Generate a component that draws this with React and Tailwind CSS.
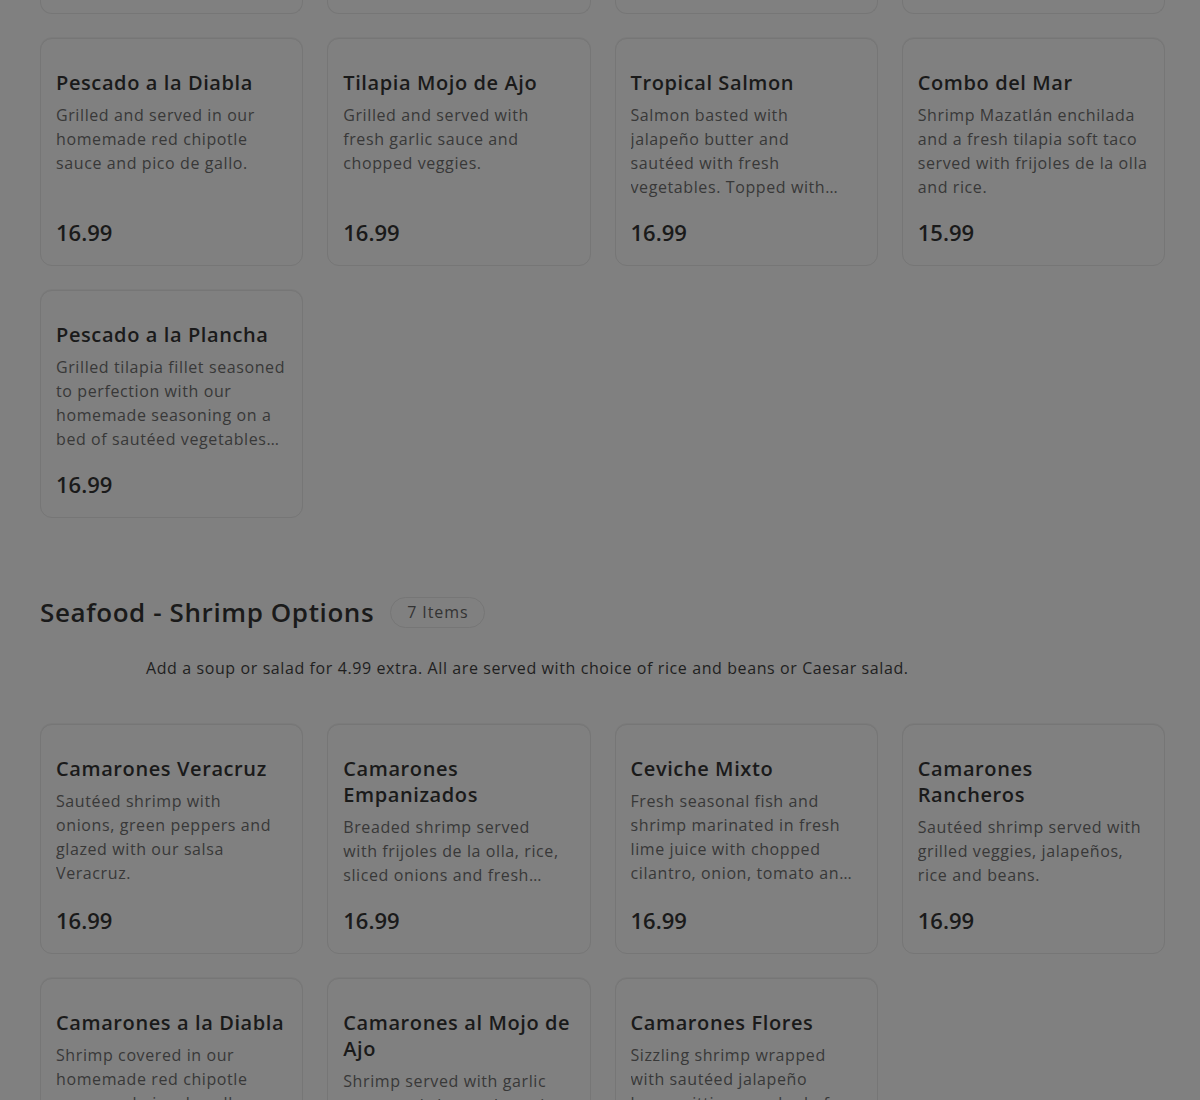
import React from "react";

const font = { fontFamily: '"Open Sans", "Liberation Sans", sans-serif' };

function Card({ title, desc, price, clamp }) {
  return (
    <div className="flex flex-col rounded-xl border border-[#767676] bg-[#808080] px-[15px] pt-[31px] pb-[19px] shadow-[0_-1px_0_rgba(0,0,0,0.04)]">
      <h3 className="whitespace-pre text-[20px] font-semibold leading-[26px] tracking-[0.6px] text-[#1a1a1a]">{title}</h3>
      <p className={`mt-[7px] whitespace-pre-line text-[16px] leading-6 tracking-[0.6px] text-[#383838] ${clamp === 3 ? "line-clamp-3" : "line-clamp-4"}`}>{desc}</p>
      <div className="mt-auto pt-[19px] text-[22px] font-semibold leading-7 text-[#1a1a1a]">{price}</div>
    </div>
  );
}

const fish = [
  { title: "Pescado a la Diabla", desc: "Grilled and served in our\nhomemade red chipotle\nsauce and pico de gallo.", price: "16.99" },
  { title: "Tilapia Mojo de Ajo", desc: "Grilled and served with\nfresh garlic sauce and\nchopped veggies.", price: "16.99" },
  { title: "Tropical Salmon", desc: "Salmon basted with\njalapeño butter and\nsautéed with fresh\nvegetables. Topped with mango pico de gallo.", price: "16.99" },
  { title: "Combo del Mar", desc: "Shrimp Mazatlán enchilada\nand a fresh tilapia soft taco\nserved with frijoles de la olla\nand rice.", price: "15.99" },
  { title: "Pescado a la Plancha", desc: "Grilled tilapia fillet seasoned\nto perfection with our\nhomemade seasoning on a\nbed of sautéed vegetables and rice.", price: "16.99" },
];

const shrimp = [
  { title: "Camarones Veracruz", desc: "Sautéed shrimp with\nonions, green peppers and\nglazed with our salsa\nVeracruz.", price: "16.99" },
  { title: "Camarones\nEmpanizados", desc: "Breaded shrimp served\nwith frijoles de la olla, rice,\nsliced onions and fresh avocado.", price: "16.99", clamp: 3 },
  { title: "Ceviche Mixto", desc: "Fresh seasonal fish and\nshrimp marinated in fresh\nlime juice with chopped\ncilantro, onion, tomato and cucumber.", price: "16.99" },
  { title: "Camarones\nRancheros", desc: "Sautéed shrimp served with\ngrilled veggies, jalapeños,\nrice and beans.", price: "16.99", clamp: 3 },
  { title: "Camarones a la Diabla", desc: "Shrimp covered in our\nhomemade red chipotle\nsauce and pico de gallo.", price: "16.99" },
  { title: "Camarones al Mojo de\nAjo", desc: "Shrimp served with garlic\nsauce and chopped veggies.", price: "16.99", clamp: 3 },
  { title: "Camarones Flores", desc: "Sizzling shrimp wrapped\nwith sautéed jalapeño\nbacon sitting on a bed of rice.", price: "16.99" },
];

export default function App() {
  return (
    <div className="h-[1100px] w-[1200px] overflow-hidden bg-[#808080]" style={font}>
      <div className="pl-10 pr-[35px]">
        <div className="grid grid-cols-4 gap-x-6">
          {[0, 1, 2, 3].map((i) => (
            <div key={i} className="h-[14px] rounded-b-xl border-x border-b border-[#767676]" />
          ))}
        </div>
        <div className="mt-6 grid grid-cols-4 gap-6">
          {fish.map((c) => (
            <Card key={c.title} {...c} />
          ))}
        </div>

        <div className="mt-[77px] flex items-center gap-4">
          <h2 className="text-[26px] font-semibold leading-[34px] tracking-[0.6px] text-[#1a1a1a]">Seafood - Shrimp Options</h2>
          <span className="flex h-[31px] items-center rounded-full border border-[#767676] px-4 text-[16px] tracking-[0.9px] text-[#333333]">7 Items</span>
        </div>
        <p className="mt-[27px] pl-[106px] text-[16px] leading-6 tracking-[0.6px] text-[#1f1f1f]">
          Add a soup or salad for 4.99 extra. All are served with choice of rice and beans or Caesar salad.
        </p>

        <div className="mt-11 grid grid-cols-4 gap-6">
          {shrimp.map((c) => (
            <Card key={c.title} {...c} />
          ))}
        </div>
      </div>
    </div>
  );
}
